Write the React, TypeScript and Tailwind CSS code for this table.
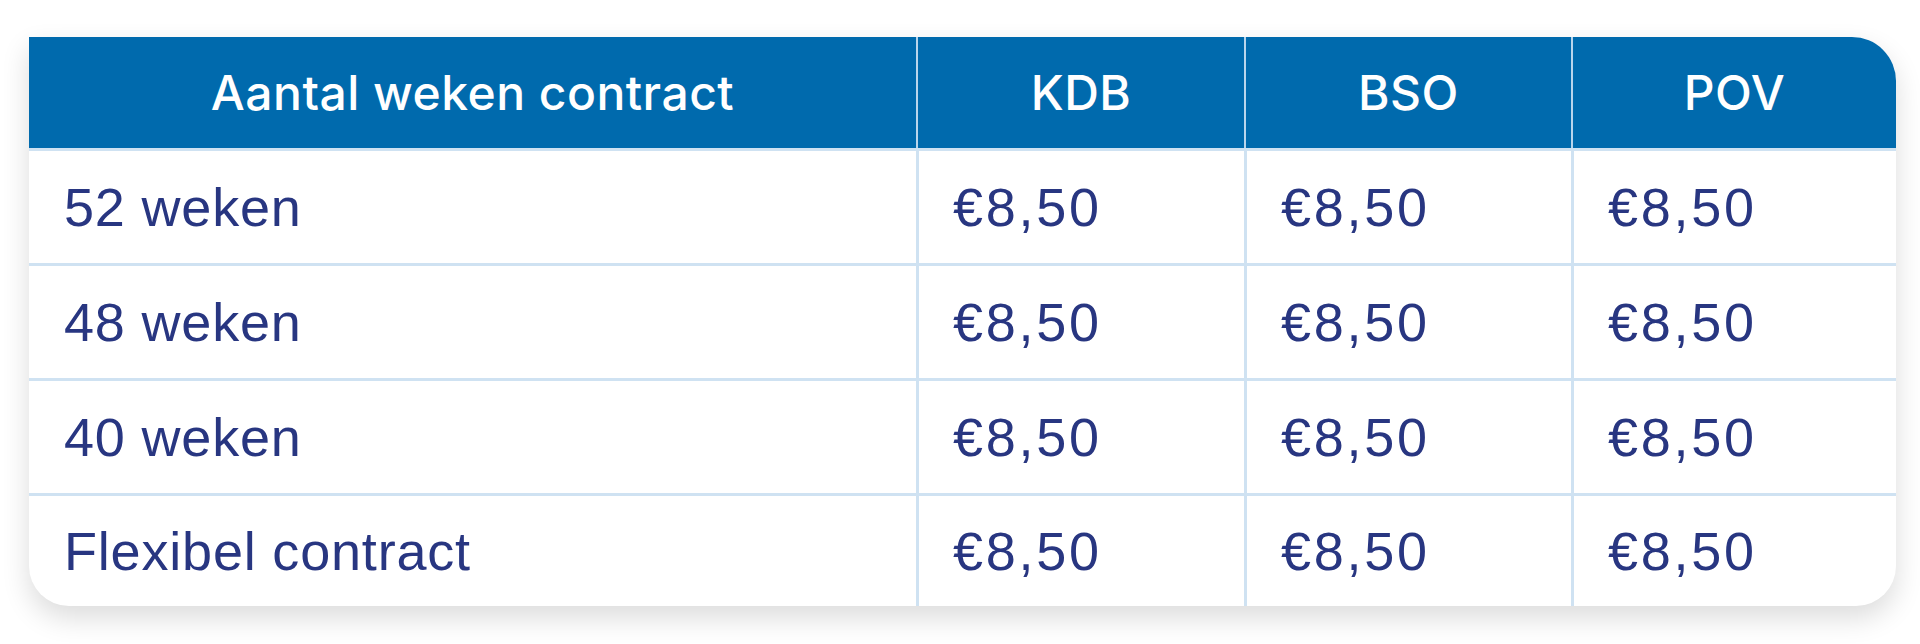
const headers = ["Aantal weken contract", "KDB", "BSO", "POV"];

const rows = [
  { label: "52 weken", prices: ["€8,50", "€8,50", "€8,50"] },
  { label: "48 weken", prices: ["€8,50", "€8,50", "€8,50"] },
  { label: "40 weken", prices: ["€8,50", "€8,50", "€8,50"] },
  { label: "Flexibel contract", prices: ["€8,50", "€8,50", "€8,50"] },
];

const cols = "grid grid-cols-[887px_328px_327px_325px]";

export default function App() {
  return (
    <div className="min-h-[644px] w-[1920px] bg-white pl-[29px] pt-[37px]">
      <div className="w-[1867px] overflow-hidden rounded-tr-[44px] rounded-br-[40px] rounded-bl-[40px] bg-white shadow-[0_12px_28px_rgba(0,0,0,0.14)]">
        <div
          className={`${cols} h-[111px] bg-[#006aad] text-white`}
          style={{ fontFamily: "Inter, 'Open Sans', sans-serif" }}
        >
          {headers.map((h, i) => (
            <div
              key={h}
              className={`flex items-center justify-center text-[48px] font-medium tracking-[0.01em] ${
                i > 0 ? "border-l-2 border-[#b9d5ec]" : ""
              }`}
            >
              {h}
            </div>
          ))}
        </div>

        {rows.map((row, r) => (
          <div
            key={row.label}
            className={`${cols} border-t-[3px] border-[#cfe2f2] text-[#283681] ${
              r === rows.length - 1 ? "h-[113px]" : "h-[115px]"
            }`}
            style={{ fontFamily: "'Liberation Sans', Arial, sans-serif" }}
          >
            <div className="flex items-center px-[35px] text-[54px] tracking-[0.015em]">
              {row.label}
            </div>
            {row.prices.map((p, i) => (
              <div
                key={i}
                className="flex items-center border-l-[3px] border-[#cfe2f2] px-[34px] text-[54px] tracking-[0.05em]"
              >
                {p}
              </div>
            ))}
          </div>
        ))}
      </div>
    </div>
  );
}
